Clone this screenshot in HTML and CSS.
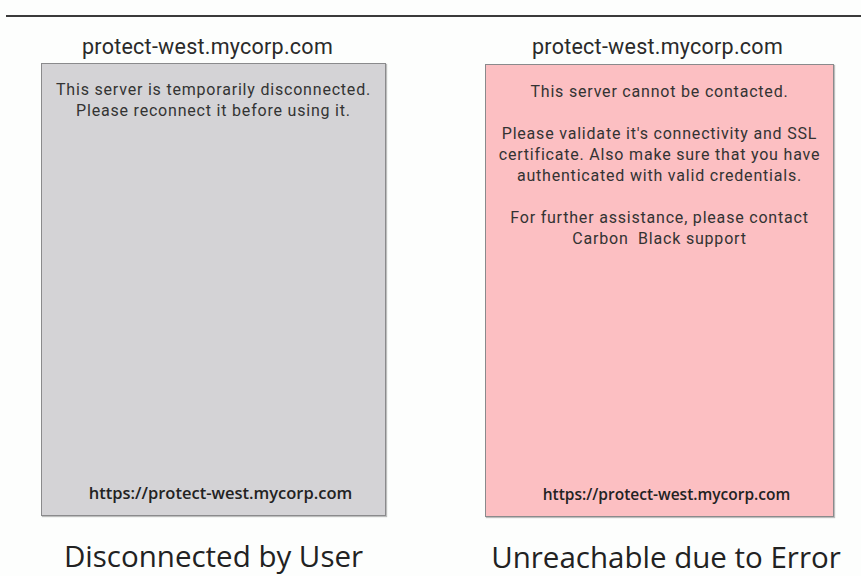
FILE: index.html
```html
<!DOCTYPE html>
<html>
<head>
<meta charset="utf-8">
<link rel="stylesheet" href="styles.css">
</head>
<body>
<div class="rule"></div>
<div class="cols">
  <div class="col col-left">
    <div class="host">protect-west.mycorp.com</div>
    <div class="card card-gray">
      <div class="msg">
        <p>This server is temporarily disconnected.<br>Please reconnect it before using it.</p>
      </div>
      <div class="url">https://protect-west.mycorp.com</div>
    </div>
    <div class="label">Disconnected by User</div>
  </div>
  <div class="col col-right">
    <div class="host">protect-west.mycorp.com</div>
    <div class="card card-pink">
      <div class="msg">
        <p>This server cannot be contacted.</p>
        <p>Please validate it's connectivity and SSL<br>certificate. Also make sure that you have<br>authenticated with valid credentials.</p>
        <p>For further assistance, please contact<br>Carbon&nbsp; Black support</p>
      </div>
      <div class="url">https://protect-west.mycorp.com</div>
    </div>
    <div class="label">Unreachable due to Error</div>
  </div>
</div>
</body>
</html>
```
FILE: styles.css
```css
html, body {
  margin: 0;
  padding: 0;
  background: #fdfefd;
}
body {
  width: 861px;
  height: 576px;
  overflow: hidden;
  font-family: Roboto, "Liberation Sans", sans-serif;
  color: #333;
}
.rule {
  margin: 15px 0 0 6px;
  height: 2px;
  background: #3a3a3a;
}
.cols {
  display: flex;
  padding-left: 41px;
  gap: 99px;
}
.col {
  display: flex;
  flex-direction: column;
  align-items: center;
}
.col-left { width: 345px; }
.col-right { width: 349px; }
.host {
  margin-top: 15px;
  height: 31px;
  font-size: 21.5px;
  letter-spacing: 0.25px;
  line-height: 29px;
  color: #2a2a2a;
  white-space: nowrap;
}
.col-left .host { margin-right: 12px; }
.col-right .host { margin-right: 4px; }
.card {
  box-sizing: border-box;
  width: 100%;
  height: 453px;
  border: 1px solid #8a8a8c;
  box-shadow: 1px 1px 1px rgba(0,0,0,0.25);
  display: flex;
  flex-direction: column;
  justify-content: space-between;
  align-items: center;
}
.card-gray { background: #d4d3d6; }
.card-pink { background: #fcbfc2; margin-top: 1px; }
.msg {
  padding-top: 15px;
  font-size: 16px;
  letter-spacing: 0.8px;
  line-height: 21px;
  text-align: center;
  color: #333;
}
.card-pink .msg { padding-top: 16px; }
.msg p { margin: 0 0 21px; }
.url {
  font-family: "Open Sans", sans-serif;
  font-weight: 600;
  font-size: 16.5px;
  line-height: 20px;
  color: #222;
  margin-bottom: 12px;
  margin-left: 14px;
  white-space: nowrap;
}
.card-pink .url {
  font-size: 15.5px;
}
.label {
  margin-top: 20px;
  font-family: "Open Sans", sans-serif;
  font-size: 29.5px;
  line-height: 40px;
  color: #222;
  white-space: nowrap;
}
.col-right .label { margin-left: 13px; }
```
